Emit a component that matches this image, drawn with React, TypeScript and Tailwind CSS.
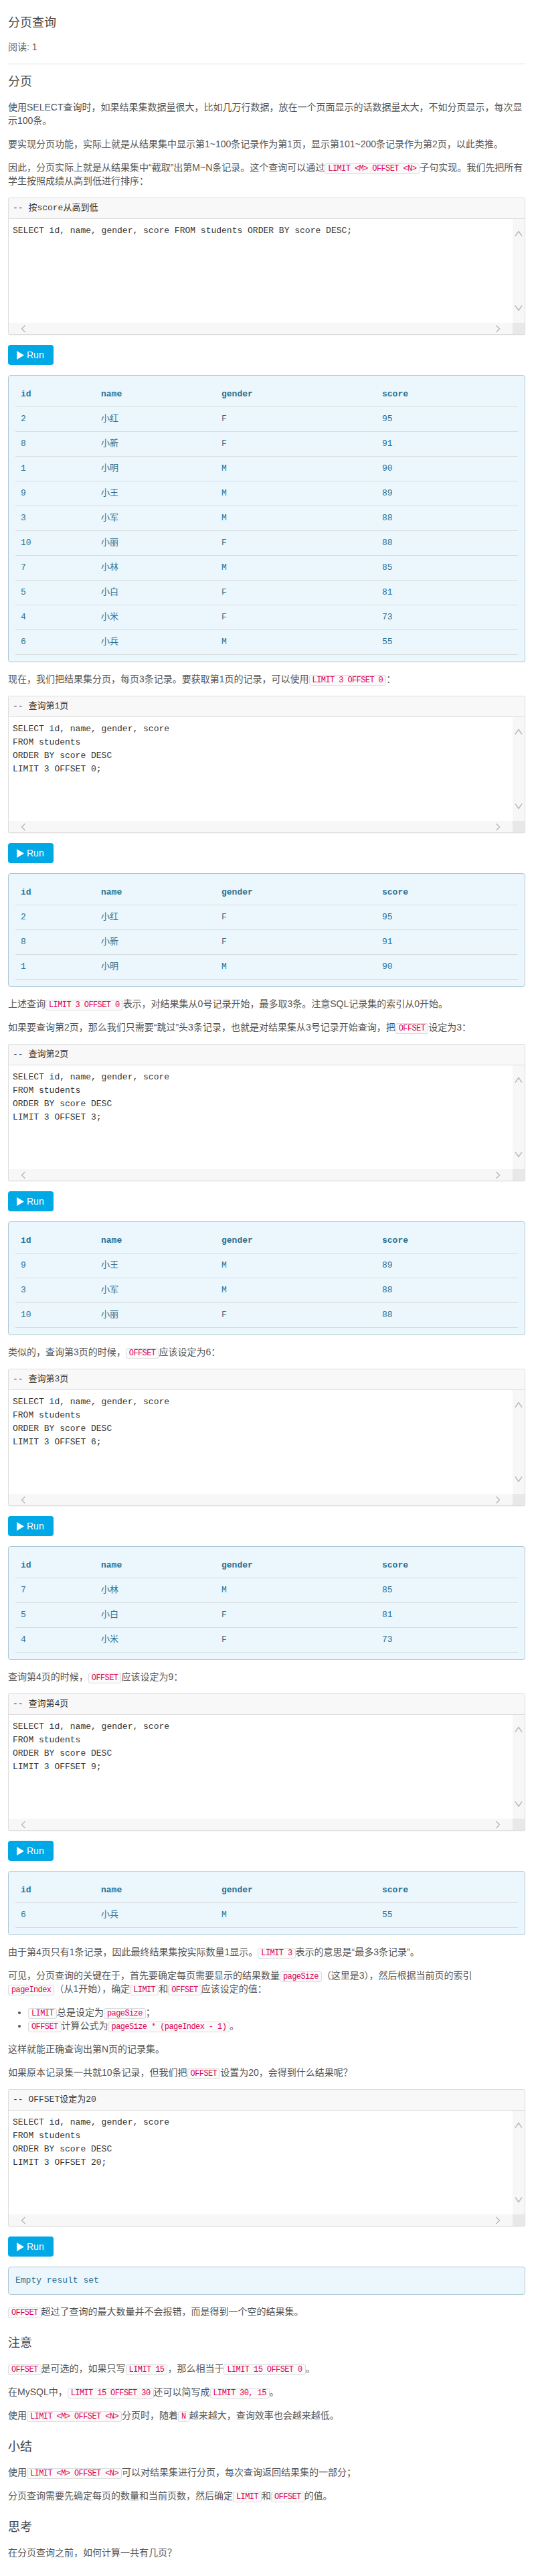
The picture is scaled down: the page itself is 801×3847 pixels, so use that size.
import React from 'react';

type Row = [string, string, string, string];

const ALL_ROWS: Row[] = [
  ['2', '小红', 'F', '95'],
  ['8', '小新', 'F', '91'],
  ['1', '小明', 'M', '90'],
  ['9', '小王', 'M', '89'],
  ['3', '小军', 'M', '88'],
  ['10', '小丽', 'F', '88'],
  ['7', '小林', 'M', '85'],
  ['5', '小白', 'F', '81'],
  ['4', '小米', 'F', '73'],
  ['6', '小兵', 'M', '55'],
];

const MONO = "font-['Liberation_Mono','Noto_Sans_CJK_SC',monospace]";

function Code({ children }: { children: React.ReactNode }) {
  return (
    <code
      className={`${MONO} whitespace-nowrap rounded-[3px] border border-[#ddd] bg-[#fafafa] px-[4px] text-[12px] leading-[14px] tracking-[-0.6px] text-[#dd0055]`}
    >
      {children}
    </code>
  );
}

// text with `code` spans
function Rich({ text }: { text: string }) {
  const parts = text.split('`');
  return (
    <>
      {parts.map((p, i) =>
        i % 2 === 1 ? <Code key={i}>{p}</Code> : <React.Fragment key={i}>{p}</React.Fragment>,
      )}
    </>
  );
}

function P({ text }: { text: string }) {
  return (
    <p className="mb-[15px] text-[14px] leading-5 text-[#555]">
      <Rich text={text} />
    </p>
  );
}

function H({ children }: { children: React.ReactNode }) {
  return (
    <h2 className="mt-[25px] mb-4 text-[18px] leading-6 text-[#444]">
      {children}
    </h2>
  );
}

function Up() {
  return (
    <svg width="12" height="10" viewBox="0 0 12 10" fill="none" stroke="#b8b8b8" strokeWidth="1.4">
      <polyline points="1,8.5 6,1.5 11,8.5" />
    </svg>
  );
}

function Down() {
  return (
    <svg width="12" height="10" viewBox="0 0 12 10" fill="none" stroke="#b8b8b8" strokeWidth="1.4">
      <polyline points="1,1.5 6,8.5 11,1.5" />
    </svg>
  );
}

function Left() {
  return (
    <svg width="8" height="12" viewBox="0 0 8 12" fill="none" stroke="#b8b8b8" strokeWidth="1.4">
      <polyline points="6.5,1 1.5,6 6.5,11" />
    </svg>
  );
}

function Right() {
  return (
    <svg width="8" height="12" viewBox="0 0 8 12" fill="none" stroke="#b8b8b8" strokeWidth="1.4">
      <polyline points="1.5,1 6.5,6 1.5,11" />
    </svg>
  );
}

function CodeBox({ header, lines }: { header: string; lines: string[] }) {
  return (
    <div className="mb-[15px] rounded-[2px] border border-[#ddd] shadow-[0_1px_1px_rgba(0,0,0,0.04)]">
      <div
        className={`${MONO} h-[31px] border-b border-[#ddd] bg-[#f8f8f8] px-[6px] py-[5px] text-[13px] leading-5 text-[#333]`}
      >
        {header}
      </div>
      <div className="flex h-[172px] flex-col bg-white">
        <div className="flex min-h-0 flex-1">
          <div className={`${MONO} flex-1 px-[6px] pt-[8px] text-[13px] leading-5 text-[#333]`}>
            {lines.map((l, i) => (
              <div key={i} className="whitespace-pre">
                {l}
              </div>
            ))}
          </div>
          <div className="flex w-[18px] flex-col items-center justify-between bg-[#f7f7f7] py-[17px]">
            <Up />
            <Down />
          </div>
        </div>
        <div className="flex h-[17px]">
          <div className="flex flex-1 items-center justify-between bg-[#f7f7f7] px-[18px]">
            <Left />
            <Right />
          </div>
          <div className="w-[18px] bg-[#e8e8e8]" />
        </div>
      </div>
    </div>
  );
}

function RunButton() {
  return (
    <div className="mb-[15px] flex">
      <button className="flex h-[30px] items-center gap-[4px] rounded-[4px] bg-[#00a8e6] pl-[13px] pr-[14px] text-[14px] leading-5 text-white">
        <svg width="11" height="13" viewBox="0 0 11 13" fill="white">
          <polygon points="0,0 11,6.5 0,13" />
        </svg>
        Run
      </button>
    </div>
  );
}

function Result({ rows }: { rows: Row[] }) {
  return (
    <div className="mb-[15px] rounded-[4px] border border-[#abc6d3] bg-[#ebf7fd] p-[10px] text-[#2d7091]">
      <table className={`${MONO} w-full table-fixed border-collapse text-left text-[13px] leading-5`}>
        <colgroup>
          <col className="w-[120px]" />
          <col className="w-[180px]" />
          <col className="w-[240px]" />
          <col />
        </colgroup>
        <thead>
          <tr className="border-b border-[#d8dcde]">
            {['id', 'name', 'gender', 'score'].map((h) => (
              <th key={h} className="py-2 pl-2 font-bold">
                {h}
              </th>
            ))}
          </tr>
        </thead>
        <tbody>
          {rows.map((r) => (
            <tr key={r[0]} className="border-b border-[#d8dcde]">
              {r.map((c, i) => (
                <td key={i} className="py-2 pl-2">
                  {c}
                </td>
              ))}
            </tr>
          ))}
        </tbody>
      </table>
    </div>
  );
}

const q = (offset: number) => [
  'SELECT id, name, gender, score',
  'FROM students',
  'ORDER BY score DESC',
  `LIMIT 3 OFFSET ${offset};`,
];

export default function App() {
  return (
    <div className="min-h-[3847px] bg-white pl-3 pr-4 pt-[22px] pb-[6px] font-['Liberation_Sans','Noto_Sans_CJK_SC',sans-serif]">
      <h1 className="text-[18px] leading-6 text-[#444]">分页查询</h1>
      <p className="mt-[14px] text-[14px] leading-5 text-[#666]">阅读: 1</p>
      <hr className="mt-[15px] border-t border-[#ddd]" />
      <h2 className="mt-[14px] mb-4 text-[18px] leading-6 text-[#444]">分页</h2>

      <P text="使用SELECT查询时，如果结果集数据量很大，比如几万行数据，放在一个页面显示的话数据量太大，不如分页显示，每次显示100条。" />
      <P text="要实现分页功能，实际上就是从结果集中显示第1~100条记录作为第1页，显示第101~200条记录作为第2页，以此类推。" />
      <P text="因此，分页实际上就是从结果集中“截取”出第M~N条记录。这个查询可以通过`LIMIT <M> OFFSET <N>`子句实现。我们先把所有学生按照成绩从高到低进行排序：" />
      <CodeBox
        header="-- 按score从高到低"
        lines={['SELECT id, name, gender, score FROM students ORDER BY score DESC;']}
      />
      <RunButton />
      <Result rows={ALL_ROWS} />

      <P text="现在，我们把结果集分页，每页3条记录。要获取第1页的记录，可以使用`LIMIT 3 OFFSET 0`：" />
      <CodeBox header="-- 查询第1页" lines={q(0)} />
      <RunButton />
      <Result rows={ALL_ROWS.slice(0, 3)} />

      <P text="上述查询`LIMIT 3 OFFSET 0`表示，对结果集从0号记录开始，最多取3条。注意SQL记录集的索引从0开始。" />
      <P text="如果要查询第2页，那么我们只需要“跳过”头3条记录，也就是对结果集从3号记录开始查询，把`OFFSET`设定为3：" />
      <CodeBox header="-- 查询第2页" lines={q(3)} />
      <RunButton />
      <Result rows={ALL_ROWS.slice(3, 6)} />

      <P text="类似的，查询第3页的时候，`OFFSET`应该设定为6：" />
      <CodeBox header="-- 查询第3页" lines={q(6)} />
      <RunButton />
      <Result rows={ALL_ROWS.slice(6, 9)} />

      <P text="查询第4页的时候，`OFFSET`应该设定为9：" />
      <CodeBox header="-- 查询第4页" lines={q(9)} />
      <RunButton />
      <Result rows={ALL_ROWS.slice(9)} />

      <P text="由于第4页只有1条记录，因此最终结果集按实际数量1显示。`LIMIT 3`表示的意思是“最多3条记录”。" />
      <p className="mb-[15px] text-[14px] leading-5 text-[#555]">
        <Rich text="可见，分页查询的关键在于，首先要确定每页需要显示的结果数量`pageSize`（这里是3），然后根据当前页的索引" />
        <span className="whitespace-nowrap">
          <Code>pageIndex</Code>（从
        </span>
        <Rich text="1开始），确定`LIMIT`和`OFFSET`应该设定的值：" />
      </p>
      <ul className="mb-[15px] list-disc pl-[30px] text-[14px] leading-5 text-[#555]">
        <li>
          <Rich text="`LIMIT`总是设定为`pageSize`；" />
        </li>
        <li>
          <Rich text="`OFFSET`计算公式为`pageSize * (pageIndex - 1)`。" />
        </li>
      </ul>
      <P text="这样就能正确查询出第N页的记录集。" />
      <P text="如果原本记录集一共就10条记录，但我们把`OFFSET`设置为20，会得到什么结果呢？" />
      <CodeBox header="-- OFFSET设定为20" lines={q(20)} />
      <RunButton />
      <div
        className={`${MONO} mb-[15px] rounded-[4px] border border-[#abc6d3] bg-[#ebf7fd] p-[10px] text-[13px] leading-5 text-[#2d7091]`}
      >
        Empty result set
      </div>
      <P text="`OFFSET`超过了查询的最大数量并不会报错，而是得到一个空的结果集。" />

      <H>注意</H>
      <P text="`OFFSET`是可选的，如果只写`LIMIT 15`，那么相当于`LIMIT 15 OFFSET 0`。" />
      <P text="在MySQL中，`LIMIT 15 OFFSET 30`还可以简写成`LIMIT 30, 15`。" />
      <P text="使用`LIMIT <M> OFFSET <N>`分页时，随着`N`越来越大，查询效率也会越来越低。" />

      <H>小结</H>
      <P text="使用`LIMIT <M> OFFSET <N>`可以对结果集进行分页，每次查询返回结果集的一部分；" />
      <P text="分页查询需要先确定每页的数量和当前页数，然后确定`LIMIT`和`OFFSET`的值。" />

      <H>思考</H>
      <P text="在分页查询之前，如何计算一共有几页？" />
    </div>
  );
}
